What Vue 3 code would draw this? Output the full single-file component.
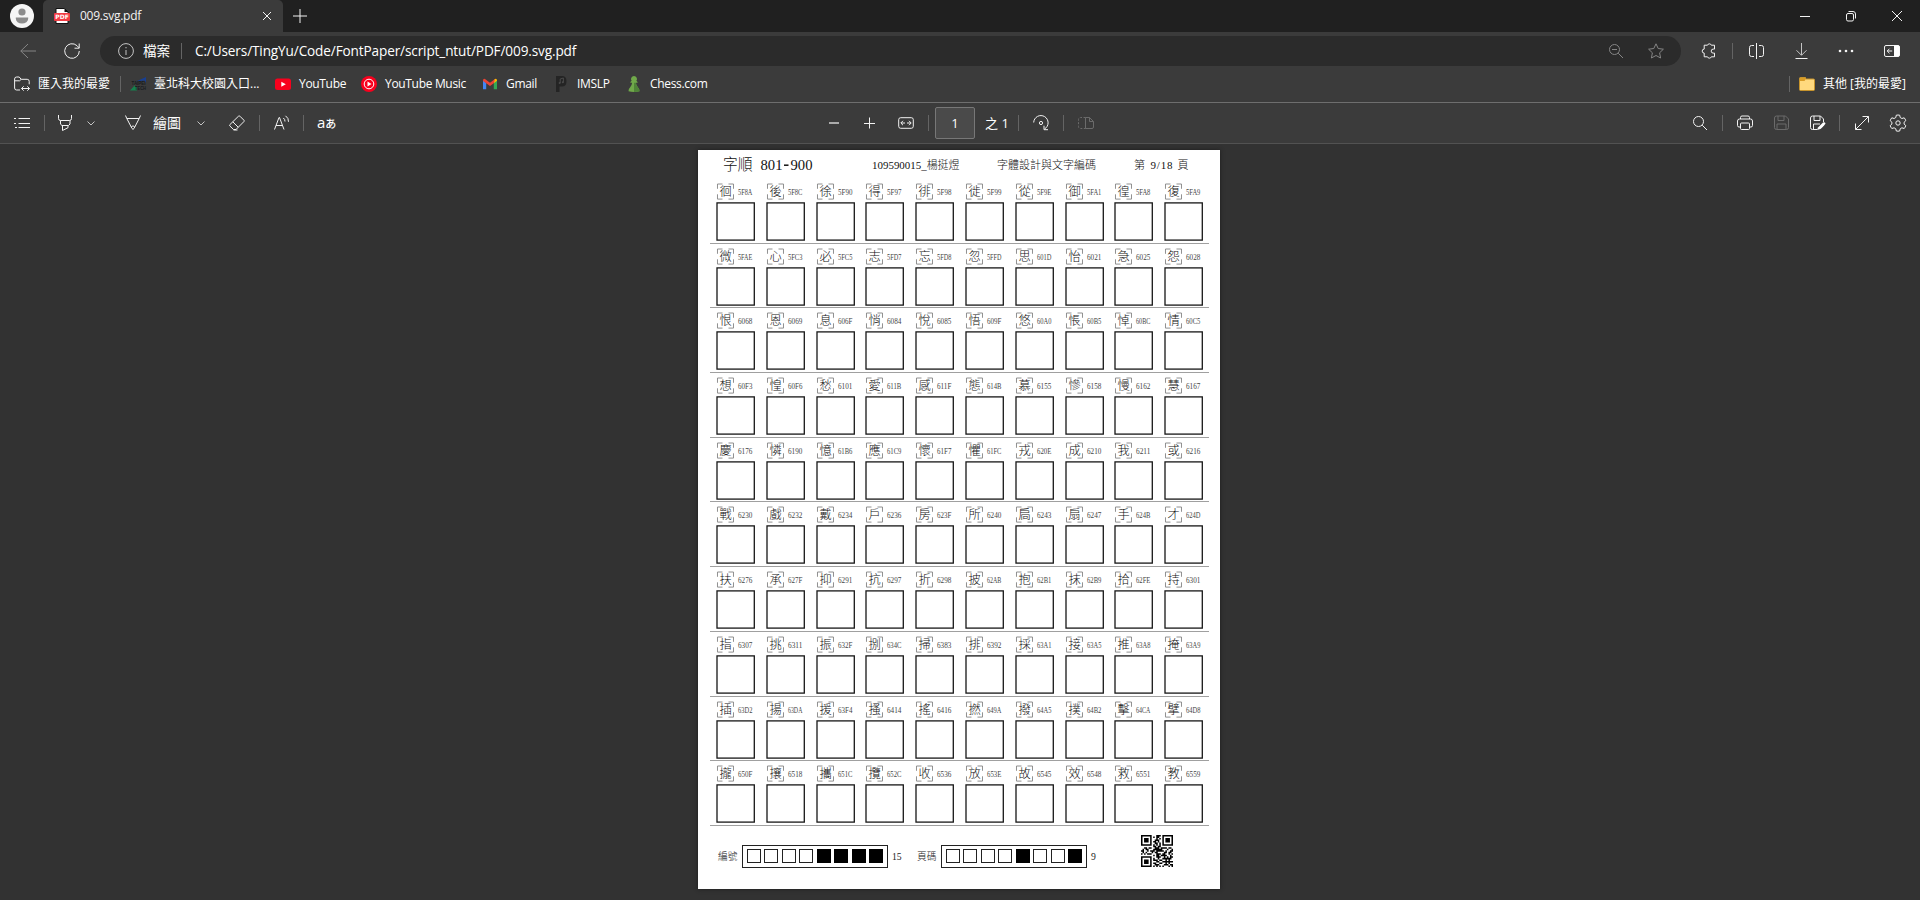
<script setup>
const codes = [
  '5F8A 5F8C 5F90 5F97 5F98 5F99 5F9E 5FA1 5FA8 5FA9',
  '5FAE 5FC3 5FC5 5FD7 5FD8 5FFD 601D 6021 6025 6028',
  '6068 6069 606F 6084 6085 609F 60A0 60B5 60BC 60C5',
  '60F3 60F6 6101 611B 611F 614B 6155 6158 6162 6167',
  '6176 6190 61B6 61C9 61F7 61FC 620E 6210 6211 6216',
  '6230 6232 6234 6236 623F 6240 6243 6247 624B 624D',
  '6276 627F 6291 6297 6298 62AB 62B1 62B9 62FE 6301',
  '6307 6311 632F 634C 6383 6392 63A1 63A5 63A8 63A9',
  '63D2 63DA 63F4 6414 6416 649A 64A5 64B2 64CA 64D8',
  '650F 6518 651C 652C 6536 653E 6545 6548 6551 6559',
]
const rows = codes.map((line) =>
  line.split(' ').map((code) => ({ code, glyph: String.fromCodePoint(parseInt(code, 16)) })),
)

const studentBits = '00001111'.split('')
const pageBits = '00001001'.split('')

const qr = [
  '111111100011101111111',
  '100000101011001000001',
  '101110100010101011101',
  '101110100111001011101',
  '101110101101001011101',
  '100000100110101000001',
  '111111101010101111111',
  '000000001101100000000',
  '001101100111011110110',
  '010110001111110001001',
  '110010111011111010011',
  '010100010110000110110',
  '101011100011101100101',
  '000000001011011110010',
  '111111100011100101011',
  '100000101001001111110',
  '101110101110110010100',
  '101110100011001111111',
  '101110101100110010100',
  '100000100111000111011',
  '111111101010101000101',
]
const qrPath = qr
  .flatMap((line, y) => line.split('').map((bit, x) => (bit === '1' ? `M${x} ${y}h1v1h-1z` : '')))
  .join('')
</script>

<template>
  <div class="browser">
    <header class="titlebar">
      <svg class="avatar" viewBox="0 0 24 24"><circle cx="12" cy="12" r="12" fill="#f5f5f5" /><circle cx="12" cy="8" r="3.6" fill="#8c8c8c" /><path d="M5.8 13.4h12.4v1.2a6.2 5 0 0 1-12.4 0z" fill="#8c8c8c" /></svg>
      <div class="tab">
        <svg class="i16" viewBox="0 0 16 16"><path d="M2 .5h8.5L14 4v11.5H2z" fill="#fff" stroke="#111" /><path d="M10.5.5V4H14z" fill="#111" /><rect x="0" y="5" width="16" height="8" rx="1" fill="#f23b43" /><text class="pdf" x="8" y="11.3" text-anchor="middle" fill="#fff">PDF</text></svg>
        <span class="tab-title">009.svg.pdf</span>
        <svg class="close" viewBox="0 0 10 10"><path d="M1 1l8 8M9 1l-8 8" class="ln" /></svg>
      </div>
      <svg class="newtab" viewBox="0 0 14 14"><path d="M7 0v14M0 7h14" class="ln" /></svg>
      <div class="window-controls">
        <svg class="i12" viewBox="0 0 12 12"><path d="M1 6.5h10" class="ln" /></svg>
        <svg class="i12" viewBox="0 0 12 12"><rect x="1.5" y="3.5" width="7" height="7.5" rx="1.5" class="ln" /><path d="M3.5 1.5h4.5q2.5 0 2.5 2.5v4.5" class="ln" /></svg>
        <svg class="i12" viewBox="0 0 12 12"><path d="M1 1l10 10M11 1L1 11" class="ln" /></svg>
      </div>
    </header>

    <div class="navbar">
      <svg class="i16" viewBox="0 0 16 16"><path d="M16 8H.8M8 1L.8 8 8 15" class="ln dim" /></svg>
      <svg class="i16 refresh" viewBox="0 0 16 16"><path d="M15.3 8A7.3 7.3 0 1 1 13 2.7L15 4.8M15.2 .5v4.7H10.5" class="ln" /></svg>
      <div class="address">
        <svg class="i16" viewBox="0 0 16 16"><circle cx="8" cy="8" r="7.4" class="ln soft" /><path d="M8 7v5M8 4v1.3" class="ln soft" /></svg>
        <span class="cjk scheme">檔案</span>
        <i class="sep"></i>
        <span class="url">C:/Users/TingYu/Code/FontPaper/script_ntut/PDF/009.svg.pdf</span>
        <svg class="i14" viewBox="0 0 14 14"><circle cx="5.5" cy="5.5" r="5" class="ln dim" /><path d="M3 5.5h5M9.2 9.2L14 14" class="ln dim" /></svg>
        <svg class="i16" viewBox="0 0 16 16"><path d="M8 .8l2.2 4.7 5.2.7-3.8 3.6 1 5.2L8 12.5 3.4 15l1-5.2L.6 6.2l5.2-.7z" class="ln dim" /></svg>
      </div>
      <svg class="i16" viewBox="0 0 16 16"><path d="M3.2 2.2h3.300a2 2 0 0 1 3.800 0h3.200v3.900h-1.300a2 2 0 0 0 0 4h1.300v3.700h-3.200a2 2 0 0 1-3.800 0H3.200v-3.700a2 2 0 0 1 0-4z" class="ln" /></svg>
      <i class="sep"></i>
      <svg class="i16" viewBox="0 0 16 16"><path d="M7.5 0v16M5 2.500H2.500Q.5 2.500.5 4.500v7q0 2 2 2H5M10 2.500h2.500q2 0 2 2v7q0 2-2 2H10" class="ln" /></svg>
      <svg class="i16" viewBox="0 0 16 16"><path d="M6.500 0v12M1.500 7.300l5 5 5-5" class="ln soft" /><path d="M.5 15.500h12" class="ln" /></svg>
      <svg class="i16" viewBox="0 0 16 16"><g fill="#f5f5f5"><circle cx="2" cy="8" r="1.3" /><circle cx="8" cy="8" r="1.3" /><circle cx="14" cy="8" r="1.3" /></g></svg>
      <svg class="i16" viewBox="0 0 16 16"><rect x=".5" y="2.5" width="15" height="11" rx="1.5" class="ln" /><path d="M10 2.5h4.500l1 1v9l-1 1H10z" fill="#fff" /><path d="M8.200 8H3.200M5.500 5.700L3.200 8l2.300 2.300" class="ln" /></svg>
    </div>

    <div class="favorites">
      <svg class="i16" viewBox="0 0 16 16"><path d="M6 14H2.600Q.6 14 .6 12V3Q.6 1 2.600 1h2.600l2 2.300h6q2 0 2 2v3M.6 4.800h5l1.600-1.500M7.500 12.500h8M9.700 10.300l-2.200 2.200 2.200 2.200M13.300 10.300l2.200 2.200-2.200 2.200" class="ln" /></svg>
      <span class="cjk import">匯入我的最愛</span>
      <i class="sep"></i>
      <svg class="i16" viewBox="0 0 16 16"><path d="M6 5.500L16 1v6l-1.500-2.500z" fill="#183f91" /><path d="M0 14.500L5 9v2h2v3.500z" fill="#16804f" /><text class="taipei" x="1.500" y="8.800" textLength="14" lengthAdjust="spacingAndGlyphs">TAIPEI</text><text class="taipei" x="5" y="14" textLength="11" lengthAdjust="spacingAndGlyphs">TECH</text></svg>
      <span class="cjk school">臺北科大校園入口...</span>
      <svg class="i16" viewBox="0 0 16 16"><rect x="0" y="2.5" width="16" height="11.5" rx="2.5" fill="#f8001d" /><path d="M6.300 5.700v5l4.500-2.500z" fill="#fff" /></svg>
      <span class="fav">YouTube</span>
      <svg class="i16" viewBox="0 0 16 16"><circle cx="8" cy="8" r="8" fill="#f8001d" /><circle cx="8" cy="8" r="4.800" fill="none" stroke="#fff" /><path d="M6.500 5.500v5l4-2.500z" fill="#fff" /></svg>
      <span class="fav">YouTube Music</span>
      <svg class="i14" viewBox="0 0 14 14"><path d="M0 3v9.300h3.200V6z" fill="#4285f4" /><path d="M10.800 12.300H14V3l-3.200 3z" fill="#34a853" /><path d="M10.800 3.100L12 2q2-.7 2 1.700l-3.200 2.600z" fill="#fbbc04" /><path d="M0 3.700Q0 1.300 2 2l5 3.700L12 2l-1.200 4.300L7 9 0 4z" fill="#ea4335" /></svg>
      <span class="fav">Gmail</span>
      <svg class="imslp" viewBox="0 0 12 16"><path d="M1 0h6q4.500 0 4.500 5.200T7 10.500H4.500V16H1z" fill="#242424" /><path d="M5.200 3v4M8.400 2v4.400M5.200 3l3.200-1" stroke="#4a4a4a" fill="none" /><circle cx="4.600" cy="7" r="1" fill="#4a4a4a" /><circle cx="7.800" cy="6.300" r="1" fill="#4a4a4a" /></svg>
      <span class="fav">IMSLP</span>
      <svg class="imslp" viewBox="0 0 12 16"><path d="M6 0a3 3 0 0 1 2.400 4.800L9.600 6v.8H7.900q.2 3 2.100 4.600Q11.500 12.600 11.500 15.200 9 16 6 16T.5 15.200Q.5 12.600 2 11.400 3.900 9.800 4.100 6.800H2.400V6l1.200-1.200A3 3 0 0 1 6 0z" fill="#70a94a" /><path d="M6 6.800h1.900q.2 3 2.100 4.600 1.500 1.200 1.500 3.800Q9 16 6 16z" fill="#4f8438" /></svg>
      <span class="fav">Chess.com</span>
      <i class="sep"></i>
      <svg class="i16" viewBox="0 0 16 16"><path d="M.5 2.500Q.5 1.500 1.500 1.500h5V3h8q1 0 1 1v9.500q0 1-1 1h-13q-1 0-1-1z" fill="#ffd97e" stroke="#c7942c" /><path d="M1 2h5.500v1.500L5.500 5H1z" fill="#d99c26" /></svg>
      <span class="cjk">其他 [我的最愛]</span>
    </div>

    <div class="pdfbar">
      <div class="group left">
        <svg class="i16" viewBox="0 0 16 16"><path d="M4.500 3.500H16M4.500 8.500H16M4.500 12.500H16" class="ln" /><path d="M0 3.500h2M0 8.500h2M1 12.500h2" class="ln" /></svg>
        <i class="sep"></i>
        <svg class="i16" viewBox="0 0 16 16"><path d="M.5 0v3.500q0 2 2 2h9q2 0 2-2V0M2.500 5.500v3.700L4 10.500h6.500L12 9V5.500M4.500 10.500v5l5.500-2.800v-2.200" class="ln" /></svg>
        <svg class="chev" viewBox="0 0 8 8"><path d="M.5 2.500L4 6l3.500-3.500" class="ln soft" /></svg>
        <svg class="i16" viewBox="0 0 16 16"><path d="M.5.5l1.300 3h12.400l1.300-3M1.800 3.500L7 13.500q1 1.800 2 0l5.200-10M6.200 12l1.800-1.200L9.800 12" class="ln" /></svg>
        <span class="cjk draw">繪圖</span>
        <svg class="chev" viewBox="0 0 8 8"><path d="M.5 2.500L4 6l3.500-3.500" class="ln soft" /></svg>
        <svg class="i16" viewBox="0 0 16 16"><path d="M9.500 1.200q.7-.7 1.400 0l4 4q.7.700 0 1.400L7 14.500H4.500L.9 11q-.7-.7 0-1.400zM3.800 6.800l5.400 5.400M4.500 15h4" class="ln" /></svg>
        <i class="sep"></i>
        <svg class="i16" viewBox="0 0 16 16"><path d="M.5 14.500L5 2.500h.5L10 14.500M2 10.500h6.500M9.300 3q1.800 1.300 1.700 3.500M11.500.8q3.300 2.200 3 6" class="ln" /></svg>
        <i class="sep"></i>
        <span class="translate">a<b>あ</b></span>
      </div>
      <div class="group center">
        <svg class="i12" viewBox="0 0 12 12"><path d="M1 6h10" stroke="#aaa" stroke-width="2" /></svg>
        <svg class="i12" viewBox="0 0 12 12"><path d="M6.500 .5v11M1 6.500h11" class="ln" /></svg>
        <svg class="i16" viewBox="0 0 16 16"><rect x=".7" y="2.700" width="14.600" height="10.600" rx="2" class="ln" /><path d="M7 8H3M13 8H9M5 5.800L2.800 8 5 10.200M11 5.800L13.200 8 11 10.200" class="ln" /></svg>
        <i class="sep"></i>
        <span class="page-input">1</span>
        <span class="cjk of">之 1</span>
        <i class="sep"></i>
        <svg class="i16" viewBox="0 0 16 16"><path d="M.7 7.500A7.200 7.200 0 1 1 11.500 14M15 14.700h-4v-4" class="ln" /><circle cx="8" cy="8" r="1.600" class="ln" /></svg>
        <i class="sep"></i>
        <svg class="i16" viewBox="0 0 16 16"><path d="M7.500 2.500H2.500Q.5 2.500.5 4.500v7q0 2 2 2h5" class="ln off" stroke-dasharray="2 1.500" /><path d="M7.500 2.500h4l4 4v5.500q0 1.500-1.500 1.500H7.500zM11.500 2.500v4h4" class="ln off" /></svg>
      </div>
      <div class="group right">
        <svg class="i14" viewBox="0 0 14 14"><circle cx="5.500" cy="5.500" r="5" class="ln" /><path d="M9.200 9.200L14 14" class="ln" /></svg>
        <i class="sep"></i>
        <svg class="i16" viewBox="0 0 16 16"><path d="M3.500 12H2Q.5 12 .5 10.500V6q0-2 2-2h11q2 0 2 2v4.500q0 1.500-1.500 1.500h-1.500M3.500 4V2.500q0-1.500 1.500-1.500h6q1.500 0 1.500 1.500V4" class="ln" /><rect x="3.500" y="8" width="9" height="6.500" rx="1" class="ln" /></svg>
        <svg class="i16" viewBox="0 0 16 16"><path d="M2.500 1h9L14.500 4v8.500q0 2-2 2h-10q-2 0-2-2V3q0-2 2-2M4 1v4.500h6V1M3 14.500V9h9v5.500" class="ln off" /></svg>
        <svg class="i16" viewBox="0 0 16 16"><path d="M7 14.500H2.500q-2 0-2-2V3q0-2 2-2h8L13.500 4v3M4 1v4.500h6V1M3.500 14.500V9H10" class="ln" /><path d="M8 12.500l5-5q1.500-.8 2.500.7 0 1-5 5.800L7 15z" fill="#fff" /></svg>
        <i class="sep"></i>
        <svg class="i14" viewBox="0 0 14 14"><path d="M7.500.5h6v6M13.500.5l-13 13M.5 7.500v6h6" class="ln" /></svg>
        <svg class="gear" viewBox="0 0 18 18"><path d="M7.300 1.200q1.700-.4 3.400 0l.5 2.300 1.700 1 2.300-.7q1.100 1.200 1.600 2.900L15.100 8.200v1.900l1.700 1.500q-.5 1.700-1.600 2.900l-2.300-.7-1.700 1-.5 2.200q-1.700.4-3.400 0l-.5-2.200-1.700-1-2.300.7Q1.700 13.300 1.200 11.600l1.700-1.500V8.200L1.200 6.700q.5-1.700 1.600-2.900l2.300.7 1.700-1z" class="ln" /><circle cx="9" cy="9" r="2.200" class="ln" /></svg>
      </div>
    </div>

    <main class="viewer">
      <article class="sheet">
        <header class="sheet-head">
          <svg class="heading" viewBox="0 0 100 20"><text x="0" y="15" font-size="15.500" textLength="29.500" lengthAdjust="spacingAndGlyphs">字順</text><text x="37.500" y="14.800" font-size="15.500" textLength="22" lengthAdjust="spacingAndGlyphs">801</text><path d="M61 10.200h4.500" stroke="#111" stroke-width="1.500" /><text x="67.500" y="14.800" font-size="15.500" textLength="22" lengthAdjust="spacingAndGlyphs">900</text></svg>
          <svg class="student" viewBox="0 0 110 20"><text x="0" y="11.500" font-size="11" textLength="87.500" lengthAdjust="spacingAndGlyphs">109590015_楊挺煜</text></svg>
          <svg class="course" viewBox="0 0 110 20"><text x="0" y="11.500" font-size="11" textLength="99" lengthAdjust="spacingAndGlyphs">字體設計與文字編碼</text></svg>
          <svg class="pageno" viewBox="0 0 60 20"><text x="0" y="11.500" font-size="11">第</text><text x="16.500" y="11.500" font-size="11" textLength="22" lengthAdjust="spacing">9/18</text><text x="43.500" y="11.500" font-size="11">頁</text></svg>
        </header>

        <section class="practice">
          <div v-for="(row, r) in rows" :key="r" class="practice-row">
            <svg v-for="cell in row" :key="cell.code" class="cell" viewBox="0 0 49.800 64.690">
              <path d="M7.500 9.800V5h5M18.500 5h5v4.800M23.500 15.300v4.800h-5M12.500 20.100h-5v-4.800" class="bracket" />
              <text x="15.500" y="16.800" font-size="12.200" text-anchor="middle">{{ cell.glyph }}</text>
              <text x="28" y="16.300" font-size="7.200" textLength="14.400" lengthAdjust="spacingAndGlyphs" class="code">{{ cell.code }}</text>
              <rect x="7" y="23.900" width="37.300" height="37.200" class="box" />
            </svg>
          </div>
        </section>

        <footer class="sheet-foot">
          <span class="foot-label">編號</span>
          <div class="bits"><i v-for="(b, i) in studentBits" :key="i" :class="{ on: b === '1' }"></i></div>
          <span class="foot-value">15</span>
          <span class="foot-label">頁碼</span>
          <div class="bits"><i v-for="(b, i) in pageBits" :key="i" :class="{ on: b === '1' }"></i></div>
          <span class="foot-value">9</span>
          <svg class="qr" viewBox="0 0 21 21"><path :d="qrPath" fill="#000" /></svg>
        </footer>
      </article>
    </main>
  </div>
</template>

<style>
body { margin: 0; background: #323232; overflow: hidden; }
</style>

<style scoped>
.browser { width: 1920px; height: 900px; display: flex; flex-direction: column; background: #323232; color: #fff; font: 12px/16px "Open Sans", "Noto Sans CJK TC", sans-serif; overflow: hidden; }
.browser span { white-space: nowrap; }
svg { display: block; overflow: visible; }
.cjk { font-family: "Open Sans", "Noto Sans CJK TC", sans-serif; }
.ln { fill: none; stroke: #f2f2f2; stroke-width: 1; }
.soft { stroke: #c4c4c4; }
.dim { stroke: #858585; }
.off { stroke: #6b6b6b; }
.i16 { width: 16px; height: 16px; }
.i14 { width: 14px; height: 14px; }
.i12 { width: 12px; height: 12px; }
.chev { width: 8px; height: 8px; }
.gear { width: 18px; height: 18px; }
.imslp { width: 12px; height: 16px; }
.sep { width: 1px; height: 16px; background: #646464; }

.titlebar { height: 32px; background: #202020; display: flex; align-items: center; flex: none; }
.avatar { width: 24px; height: 24px; margin: 0 9px 0 10px; }
.tab { width: 240px; height: 32px; box-sizing: border-box; padding: 0 11px; display: flex; align-items: center; background: #3b3b3b; border-radius: 5px 5px 0 0; }
.pdf { font: bold 6px "DejaVu Sans", sans-serif; }
.tab-title { margin-left: 10px; flex: 1; font-size: 12px; color: #f2f2f2; letter-spacing: -.25px; }
.close { width: 10px; height: 10px; }
.newtab { width: 14px; height: 14px; margin-left: 10px; }
.window-controls { margin: 0 17px 0 auto; display: flex; gap: 34px; }

.navbar { height: 35px; box-sizing: border-box; padding: 3px 0 0 20px; background: #3b3b3b; display: grid; grid-template-columns: 44px 36px 1601px 31px 17px 46px 43px 46px 16px; align-items: center; flex: none; }
.address { width: 1581px; height: 30px; box-sizing: border-box; padding-left: 18px; border-radius: 15px; background: #2b2b2b; display: grid; grid-template-columns: 25px 38px 14px 1414px 39px 16px; align-items: center; }
.scheme { font-size: 13.600px; }
.url { font-size: 13.600px; letter-spacing: -.13px; }

.favorites { height: 35px; box-sizing: border-box; padding: 0 0 1px 14px; background: #3b3b3b; display: grid; grid-template-columns: 25px 81px 10px 24px 121px 24px 62px 24px 98px 23px 49px 22px 51px 22px 1139px 10px 24px 97px; align-items: center; flex: none; }
.fav { letter-spacing: -.32px; }
.import { margin-left: -1px; }
.taipei { font: bold 5px "Liberation Sans", sans-serif; fill: #171b20; }

.pdfbar { height: 40px; border-top: 1px solid #6e6e6e; border-bottom: 1px solid #525252; background: #3b3b3b; display: flex; align-items: center; flex: none; }
.group { display: grid; align-items: center; }
.left { padding-left: 14px; grid-template-columns: 30px 14px 29px 38px 28px 44px 32px 30px 15px 29px 14px 50px; width: 815px; box-sizing: border-box; }
.center { grid-template-columns: 35px 35px 30px 7px 50px 33px 15px 30px 15px 16px; padding-left: 13px; width: 865px; box-sizing: border-box; }
.right { grid-template-columns: 29px 15px 37px 36px 29px 16px 34px 18px; padding-left: 13px; }
.draw { font-size: 14px; }
.translate { font: 15px/16px "Open Sans", "Noto Sans CJK JP", sans-serif; display: flex; align-items: baseline; }
.translate b { font-size: 11px; font-weight: 500; }
.page-input { width: 40px; height: 32px; box-sizing: border-box; border: 1px solid #777; border-radius: 2px; background: #4a4a4a; text-align: center; line-height: 31px; font-size: 13px; }
.of { font-size: 13px; }

.viewer { flex: 1; padding: 6px 0 0 698px; background: #323232; }
.sheet { width: 522px; height: 739px; box-sizing: border-box; padding: 0 11px 0 12px; background: #fff; color: #111; fill: #111; box-shadow: 0 0 4px #1c1c1c; font-family: "Liberation Serif", "Noto Sans CJK TC", serif; }
.sheet svg { font-family: "Liberation Serif", "Noto Sans CJK TC", serif; font-weight: 300; }
.sheet-head { height: 29px; display: grid; grid-template-columns: 149px 125px 137px 60px; padding-left: 13px; align-items: start; }
.sheet-head svg { height: 20px; margin-top: 7px; }
.heading { width: 100px; }
.sheet-head .heading { margin-top: 5px; }
.student, .course { width: 110px; }
.pageno { width: 60px; }
.practice { height: 646.900px; display: grid; grid-template-rows: repeat(10, 64.690px); }
.practice-row { display: grid; grid-template-columns: repeat(10, 49.800px); border-bottom: 1px solid #a0a0a0; box-sizing: border-box; }
.cell { width: 49.800px; height: 64.690px; }
.bracket { fill: none; stroke: #858585; stroke-width: .9; }
.box { fill: none; stroke: #161616; stroke-width: 1.300; }
.code { fill: #444; }
.sheet-foot { display: grid; grid-template-columns: 24px 150px 25px 24px 150px 50px 32px; padding: 8px 0 0 8px; align-items: center; color: #222; }
.foot-label { font: 300 9.700px/12px "Noto Sans CJK TC", sans-serif; margin-top: 11px; }
.foot-value { font-size: 9.700px; line-height: 12px; margin-top: 13px; }
.bits { width: 146px; height: 23px; box-sizing: border-box; border: 1px solid #222; margin-top: 11px; display: flex; justify-content: space-between; align-items: center; padding: 0 4px; }
.bits i { width: 14px; height: 14px; box-sizing: border-box; border: 1px solid #222; }
.bits i.on { background: #000; border-color: #000; }
.qr { width: 32px; height: 32px; }
</style>
